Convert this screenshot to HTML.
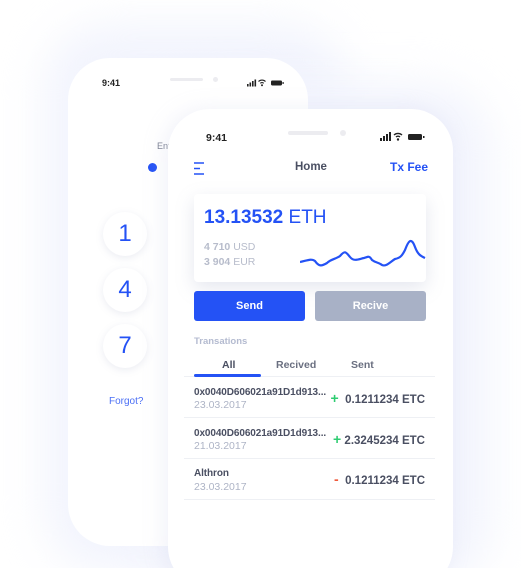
<!DOCTYPE html>
<html><head><style>
*{margin:0;padding:0;box-sizing:border-box}
html,body{width:521px;height:568px;overflow:hidden}
body{background:#fff;font-family:"Liberation Sans",sans-serif;position:relative}
.glow{position:absolute;border-radius:60px;background:#f2f4fd;filter:blur(22px)}
.ph{position:absolute;background:#fff;border-radius:42px}
.a{position:absolute;white-space:nowrap}
.circ{position:absolute;width:44px;height:44px;border-radius:50%;background:#fff;box-shadow:0 2px 8px rgba(120,130,170,.15);color:#2452f5;font-size:24px;text-align:center;line-height:44px}
.row .t1{font-size:10px;font-weight:bold;color:#4a4f62;letter-spacing:-0.1px}
.row .t2{font-size:10.5px;color:#aeb4c6}
.amt{font-size:11.5px;font-weight:bold;color:#4a4f62;right:96px}
</style></head><body>
<div class="glow" style="left:45px;top:25px;width:300px;height:545px"></div>
<div class="glow" style="left:150px;top:85px;width:340px;height:500px"></div>
<div class="ph" style="left:68px;top:58px;width:240px;height:488px"></div>
<div class="a" style="left:102px;top:78px;font-size:9px;font-weight:bold;color:#222">9:41</div>
<div class="a" style="left:170px;top:78px;width:33px;height:3px;border-radius:2px;background:#ececf0"></div>
<div class="a" style="left:213px;top:77px;width:5px;height:5px;border-radius:50%;background:#ececf0"></div>
<svg class="a" style="left:247px;top:79px" width="38" height="8"><rect x="0" y="5" width="1.6" height="2.5" fill="#222"/><rect x="2.5" y="3.5" width="1.6" height="4" fill="#222"/><rect x="5" y="2" width="1.6" height="5.5" fill="#222"/><rect x="7.5" y="0.5" width="1.6" height="7" fill="#222"/><path d="M11.5 2.5a5 5 0 0 1 7 0M13.3 4.3a2.5 2.5 0 0 1 3.4 0" stroke="#222" stroke-width="1.2" fill="none"/><circle cx="15" cy="6.3" r="1" fill="#222"/><rect x="24" y="1.5" width="11" height="5" rx="1.2" fill="#222"/><rect x="35.5" y="3" width="1.2" height="2" fill="#222"/></svg>
<div class="a" style="left:157px;top:141px;font-size:9px;color:#7a7f90">Ent</div>
<div class="a" style="left:148px;top:163px;width:9px;height:9px;border-radius:50%;background:#2452f5"></div>
<div class="circ" style="left:103px;top:212px">1</div>
<div class="circ" style="left:103px;top:268px">4</div>
<div class="circ" style="left:103px;top:324px">7</div>
<div class="a" style="left:109px;top:396px;font-size:10px;color:#4b6ff5">Forgot?</div>

<div class="ph" style="left:168px;top:109px;width:285px;height:480px;box-shadow:-4px 0 20px rgba(200,205,230,.25)"></div>
<div class="a" style="left:206px;top:132px;font-size:10.5px;font-weight:bold;color:#222">9:41</div>
<div class="a" style="left:288px;top:131px;width:40px;height:4px;border-radius:2px;background:#ececf0"></div>
<div class="a" style="left:340px;top:130px;width:6px;height:6px;border-radius:50%;background:#ececf0"></div>
<svg class="a" style="left:380px;top:132px" width="46" height="10"><rect x="0" y="6" width="2" height="3" fill="#222"/><rect x="3" y="4" width="2" height="5" fill="#222"/><rect x="6" y="2" width="2" height="7" fill="#222"/><rect x="9" y="0" width="2" height="9" fill="#222"/><path d="M14 3a6 6 0 0 1 8 0M16 5a3 3 0 0 1 4 0" stroke="#222" stroke-width="1.4" fill="none"/><circle cx="18" cy="7.5" r="1.2" fill="#222"/><rect x="28" y="2" width="14" height="6" rx="1.5" fill="#222"/><rect x="43" y="4" width="1.5" height="2" fill="#222"/></svg>
<svg class="a" style="left:194px;top:162px" width="12" height="13"><path d="M0 1h10M0 6.5h6M0 12h10" stroke="#2452f5" stroke-width="1.6"/></svg>
<div class="a" style="left:295px;top:161px;font-size:11.5px;font-weight:bold;color:#4a4f62">Home</div>
<div class="a" style="left:390px;top:160px;font-size:12px;font-weight:bold;color:#2452f5">Tx Fee</div>
<div class="a" style="left:194px;top:194px;width:232px;height:88px;background:#fff;border-radius:4px;box-shadow:0 6px 18px rgba(150,160,190,.25)"></div>
<div class="a" style="left:204px;top:207px;font-size:19px;color:#2452f5"><b>13.13532</b> ETH</div>
<div class="a" style="left:204px;top:241px;font-size:10.5px;color:#b7bccb"><b>4 710</b> USD</div>
<div class="a" style="left:204px;top:256px;font-size:10.5px;color:#b7bccb"><b>3 904</b> EUR</div>
<svg class="a" style="left:300px;top:234px" width="126" height="36"><path d="M0 28 C6 27 11 24 15 27 C19 33 22 32 27 29 C31 25 36 25 40 22 C45 16 46 18 50 23 C54 28 59 25 64 24 C68 23 69 21 72 26 C76 29 78 28 82 31 C86 33 90 28 95 25 C100 24 102 22 105 16 C108 8 111 2 115 13 C118 21 121 22 125 24" stroke="#2452f5" stroke-width="2.2" fill="none"/></svg>
<div class="a" style="left:194px;top:291px;width:111px;height:30px;border-radius:3px;background:#2452f5;color:#fff;font-size:11px;font-weight:bold;text-align:center;line-height:30px">Send</div>
<div class="a" style="left:315px;top:291px;width:111px;height:30px;border-radius:3px;background:#a8b1c6;color:#fff;font-size:11px;font-weight:bold;text-align:center;line-height:30px">Recive</div>
<div class="a" style="left:194px;top:336px;font-size:9.5px;font-weight:bold;color:#b4bbd0">Transations</div>
<div class="a" style="left:222px;top:359px;font-size:10.5px;font-weight:bold;color:#4a4f62">All</div>
<div class="a" style="left:276px;top:359px;font-size:10.5px;font-weight:bold;color:#6a6f80">Recived</div>
<div class="a" style="left:351px;top:359px;font-size:10.5px;font-weight:bold;color:#6a6f80">Sent</div>
<div class="a" style="left:184px;top:376px;width:251px;height:1px;background:#eef0f4"></div>
<div class="a" style="left:194px;top:374px;width:67px;height:3px;border-radius:2px;background:#2452f5"></div>
<div class="row">
<div class="a t1" style="left:194px;top:387px">0x0040D606021a91D1d913...</div>
<div class="a t2" style="left:194px;top:399px">23.03.2017</div>
<div class="a amt" style="top:390px"><span style="color:#2ecc71;font-size:14px">+</span>&nbsp; 0.1211234 ETC</div>
<div class="a" style="left:184px;top:417px;width:251px;height:1px;background:#eef0f4"></div>
<div class="a t1" style="left:194px;top:428px">0x0040D606021a91D1d913...</div>
<div class="a t2" style="left:194px;top:440px">21.03.2017</div>
<div class="a amt" style="top:431px"><span style="color:#2ecc71;font-size:14px">+</span> 2.3245234 ETC</div>
<div class="a" style="left:184px;top:458px;width:251px;height:1px;background:#eef0f4"></div>
<div class="a t1" style="left:194px;top:468px">Althron</div>
<div class="a t2" style="left:194px;top:481px">23.03.2017</div>
<div class="a amt" style="top:471px"><span style="color:#ef5a3c;font-size:14px">-</span>&nbsp; 0.1211234 ETC</div>
<div class="a" style="left:184px;top:499px;width:251px;height:1px;background:#eef0f4"></div>
</div>
</body></html>
